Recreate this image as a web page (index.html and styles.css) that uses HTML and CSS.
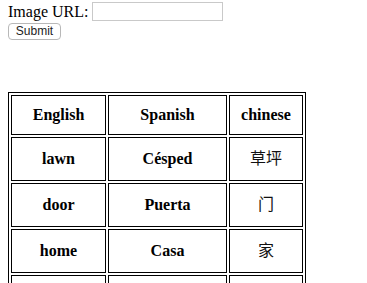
FILE: index.html
```html
<!DOCTYPE html>
<html lang="en">
<head>
  <meta charset="UTF-8" />
  <meta name="viewport" content="width=device-width, initial-scale=1.0"/>
  <title>Image URL</title>
  <link rel="stylesheet" href="styles.css">
</head>
<body>

  <form class="url-form">
    <div class="url-row">
      <label for="image-url">Image URL:</label>
      <input type="text" id="image-url" class="url-input">
    </div>
    <button type="submit" class="submit-btn">Submit</button>
  </form>

  <table class="word-table">
    <tr class="head-row">
      <th class="col-en">English</th>
      <th class="col-es">Spanish</th>
      <th class="col-zh">chinese</th>
    </tr>
    <tr class="word-row">
      <th>lawn</th>
      <th>Césped</th>
      <th class="zh">草坪</th>
    </tr>
    <tr class="word-row">
      <th>door</th>
      <th>Puerta</th>
      <th class="zh">门</th>
    </tr>
    <tr class="word-row">
      <th>home</th>
      <th>Casa</th>
      <th class="zh">家</th>
    </tr>
    <tr class="word-row">
      <th>window</th>
      <th>Ventana</th>
      <th class="zh">窗户</th>
    </tr>
  </table>

</body>
</html>
```

FILE: styles.css
```css
body {
  margin: 0 8px;
  font-family: "Liberation Serif", "Noto Sans CJK SC", serif;
  font-size: 16px;
  color: #000;
  background: #fff;
}

.url-row {
  display: flex;
  align-items: center;
  height: 23px;
}

.url-row label {
  line-height: 18px;
}

.url-input {
  box-sizing: border-box;
  width: 131px;
  height: 19px;
  margin: 0 0 1px 4px;
  padding: 1px 3px;
  border: 1px solid #c9c9c9;
  border-radius: 0;
  outline: none;
}

.submit-btn {
  display: block;
  box-sizing: border-box;
  width: 53px;
  height: 17px;
  padding: 0;
  font-family: "Liberation Sans", sans-serif;
  font-size: 12px;
  line-height: 15px;
  color: #222;
  background: #fff;
  border: 1px solid #b8b8b8;
  border-radius: 4px;
}

/* old-style bordered table */
.word-table {
  margin-top: 52px;
  border: 1px solid #000;
  border-spacing: 2px;
}

.word-table th {
  border: 1px solid #000;
  padding: 10px;
  text-align: center;
  font-weight: bold;
}

.head-row th {
  line-height: 18px;
}

.word-row th {
  line-height: 22px;
}

.word-table th.zh {
  font-weight: normal;
  color: #111;
}

.col-en { width: 73px; }
.col-es { width: 97px; }
.col-zh { width: 52px; }
```
